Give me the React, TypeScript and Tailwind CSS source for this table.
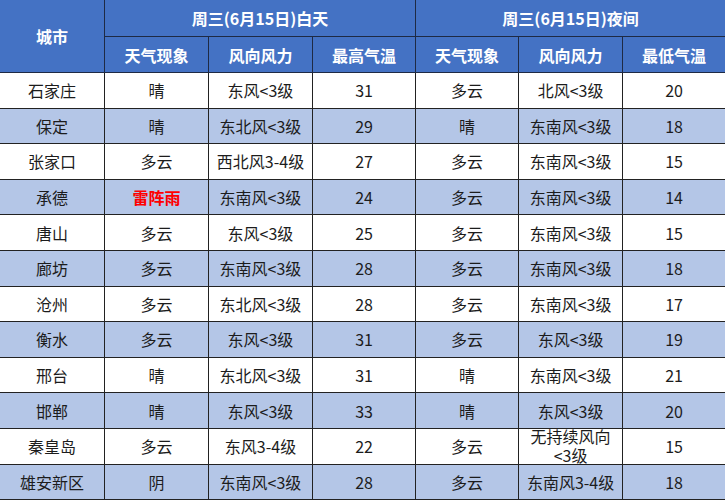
const rows: [string, string, string, string, string, string, string][] = [
  ['石家庄', '晴', '东风<3级', '31', '多云', '北风<3级', '20'],
  ['保定', '晴', '东北风<3级', '29', '晴', '东南风<3级', '18'],
  ['张家口', '多云', '西北风3-4级', '27', '多云', '东南风<3级', '15'],
  ['承德', '雷阵雨', '东南风<3级', '24', '多云', '东南风<3级', '14'],
  ['唐山', '多云', '东风<3级', '25', '多云', '东南风<3级', '15'],
  ['廊坊', '多云', '东南风<3级', '28', '多云', '东南风<3级', '18'],
  ['沧州', '多云', '东北风<3级', '28', '多云', '东南风<3级', '17'],
  ['衡水', '多云', '东风<3级', '31', '多云', '东风<3级', '19'],
  ['邢台', '晴', '东北风<3级', '31', '晴', '东南风<3级', '21'],
  ['邯郸', '晴', '东风<3级', '33', '晴', '东风<3级', '20'],
  ['秦皇岛', '多云', '东风3-4级', '22', '多云', '无持续风向<3级', '15'],
  ['雄安新区', '阴', '东南风<3级', '28', '多云', '东南风3-4级', '18'],
];

const th = 'border border-[#1e2a44] bg-[#4472c4] text-white font-bold text-[16px] text-center align-middle p-0';
const td = 'border border-[#222] text-center align-middle p-0 text-[16px] text-[#1c1c1c]';

export default function App() {
  return (
    <div className="w-[725px] h-[500px] overflow-hidden bg-white" style={{ fontFamily: '"Noto Sans CJK SC", "Noto Sans", sans-serif' }}>
      <table className="w-[726px] table-fixed border-collapse -mt-px -ml-px">
        <colgroup>
          <col className="w-[105px]" />
          <col className="w-[104px]" />
          <col className="w-[104px]" />
          <col className="w-[103px]" />
          <col className="w-[103px]" />
          <col className="w-[104px]" />
          <col className="w-[103px]" />
        </colgroup>
        <thead>
          <tr className="h-[37px]">
            <th rowSpan={2} className={th}>城市</th>
            <th colSpan={3} className={th}>周三(6月15日)白天</th>
            <th colSpan={3} className={th}>周三(6月15日)夜间</th>
          </tr>
          <tr className="h-[36px]">
            <th className={th}>天气现象</th>
            <th className={th}>风向风力</th>
            <th className={th}>最高气温</th>
            <th className={th}>天气现象</th>
            <th className={th}>风向风力</th>
            <th className={th}>最低气温</th>
          </tr>
        </thead>
        <tbody>
          {rows.map((r, i) => (
            <tr key={r[0]} className={i % 2 === 1 ? 'h-[35.6px] bg-[#b4c6e7]' : 'h-[35.6px] bg-white'}>
              {r.map((c, j) => (
                <td
                  key={j}
                  className={c === '雷阵雨' ? `${td} !text-[#ff0000] font-bold` : td}
                >
                  {c.length > 7 ? (
                    <div className="h-[33px] leading-[19px] flex flex-col items-center justify-center">
                      <span>无持续风向</span>
                      <span>&lt;3级</span>
                    </div>
                  ) : (
                    c
                  )}
                </td>
              ))}
            </tr>
          ))}
        </tbody>
      </table>
    </div>
  );
}
